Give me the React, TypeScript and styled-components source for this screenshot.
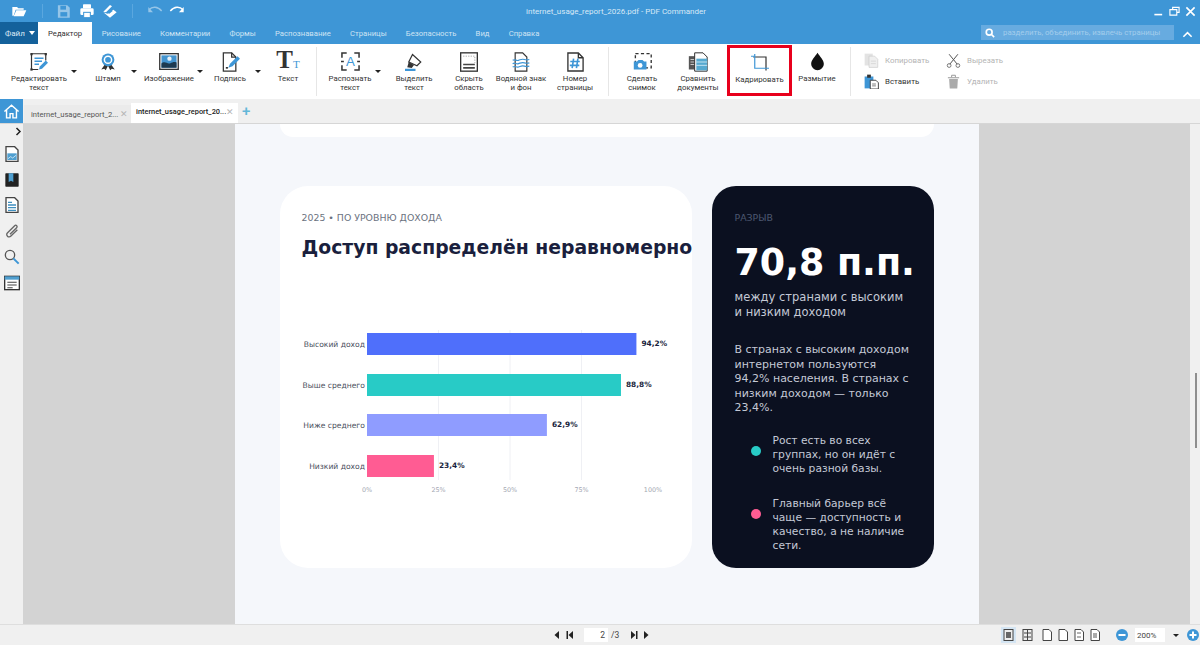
import React from 'react';
import styled, { createGlobalStyle } from 'styled-components';

const BLUE = '#3e96d6';
const DARK = '#333';

const GlobalStyle = createGlobalStyle`
  html, body { margin: 0; padding: 0; background: #f0f0f0; }
  * { box-sizing: border-box; }
`;

const Window = styled.div`
  width: 1200px;
  height: 645px;
  overflow: hidden;
  display: flex;
  flex-direction: column;
  font-family: Roboto, "Liberation Sans", sans-serif;
`;

/* title bar */
const TitleBar = styled.div`
  height: 22px;
  background: ${BLUE};
  display: grid;
  grid-template-columns: 1fr auto 1fr;
  align-items: center;
`;
const QuickBar = styled.div`
  display: flex;
  align-items: center;
  padding-left: 11px;
`;
const QuickButton = styled.div<{ $ml: number; $dim?: boolean }>`
  margin-left: ${(p) => p.$ml}px;
  display: flex;
  opacity: ${(p) => (p.$dim ? 0.45 : 1)};
`;
const QuickSep = styled.div<{ $ml: number }>`
  margin-left: ${(p) => p.$ml}px;
  width: 1px;
  height: 14px;
  background: #5aa7df;
`;
const DocTitle = styled.div`
  margin-left: 32px;
  color: #d7e9f6;
  font-size: 8px;
`;
const WinControls = styled.div`
  display: flex;
  justify-content: flex-end;
  align-items: center;
  gap: 5px;
  padding-right: 4px;
`;

/* ribbon tabs */
const RibbonRow = styled.div`
  height: 22px;
  background: ${BLUE};
  display: flex;
  align-items: stretch;
`;
const FileTab = styled.div`
  width: 38px;
  background: #14619b;
  color: #dcebf6;
  font-size: 8px;
  display: flex;
  align-items: center;
  gap: 4px;
  padding-left: 5px;
`;
const FileCaret = styled.span`
  border-left: 3.5px solid transparent;
  border-right: 3.5px solid transparent;
  border-top: 4px solid #fff;
`;
const RibbonTab = styled.div<{ $active?: boolean }>`
  padding: 0 ${(p) => (p.$active ? '10px' : '9.6px')};
  display: flex;
  align-items: center;
  font-size: 7.7px;
  white-space: nowrap;
  background: ${(p) => (p.$active ? '#fff' : 'transparent')};
  color: ${(p) => (p.$active ? '#333' : '#cfe4f4')};
`;
const RibbonSpacer = styled.div`
  flex: 1;
`;
const SearchBox = styled.div`
  width: 193px;
  height: 15px;
  margin-top: 3px;
  background: #67abe0;
  display: flex;
  align-items: center;
  gap: 8px;
  padding-left: 4px;
  color: #a3cdec;
  font-size: 7.8px;
  white-space: nowrap;
`;
const Collapse = styled.div`
  width: 26px;
  display: flex;
  align-items: center;
  justify-content: center;
  padding-top: 2px;
`;

/* toolbar */
const Toolbar = styled.div`
  height: 55px;
  background: #fff;
  display: flex;
  align-items: flex-start;
  padding-left: 8px;
`;
const Tool = styled.div<{ $w: number; $ml?: number; $highlight?: boolean }>`
  width: ${(p) => p.$w}px;
  margin-left: ${(p) => p.$ml ?? 0}px;
  margin-top: ${(p) => (p.$highlight ? 1 : 0)}px;
  height: ${(p) => (p.$highlight ? '51px' : '55px')};
  border: ${(p) => (p.$highlight ? '3px solid #e8001c' : 'none')};
  padding-top: ${(p) => (p.$highlight ? 4 : 7)}px;
  display: flex;
  flex-direction: column;
  align-items: center;
  flex-shrink: 0;
`;
const ToolIcon = styled.div`
  height: 21px;
  display: flex;
  align-items: center;
  justify-content: center;
`;
const ToolLabel = styled.div`
  margin-top: 1.5px;
  font-size: 7.8px;
  line-height: 9px;
  color: #333;
  text-align: center;
  white-space: pre;
`;
const Caret = styled.div`
  width: 8px;
  height: 55px;
  flex-shrink: 0;
  display: flex;
  justify-content: center;
  padding-top: 26px;
  &::after {
    content: '';
    height: 0;
    border-left: 3px solid transparent;
    border-right: 3px solid transparent;
    border-top: 3px solid #222;
  }
`;
const ToolSep = styled.div<{ $ml: number }>`
  width: 1px;
  height: 49px;
  margin: 3px 0 0 ${(p) => p.$ml}px;
  flex-shrink: 0;
  background: #e6e6e6;
`;
const TextGlyph = styled.div`
  display: flex;
  align-items: baseline;
  font-family: "Liberation Serif", serif;
  font-size: 25px;
  line-height: 21px;
  font-weight: 700;
  color: ${DARK};
`;
const TextGlyphSmall = styled.span`
  font-size: 11px;
  font-weight: 400;
  color: ${BLUE};
`;
const SmallGrid = styled.div`
  margin: 6px 0 0 13px;
  display: grid;
  grid-template-columns: 82px 70px;
  grid-auto-rows: 21px;
`;
const SmallTool = styled.div<{ $disabled?: boolean }>`
  display: flex;
  align-items: center;
  gap: 6px;
  font-size: 7.9px;
  color: ${(p) => (p.$disabled ? '#b4b4b4' : '#333')};
`;

/* document tabs */
const TabBar = styled.div`
  height: 25px;
  background: #f0f0f0;
  border-bottom: 1px solid #d6d6d6;
  display: flex;
  align-items: flex-end;
`;
const HomeButton = styled.div`
  width: 23px;
  height: 24px;
  background: ${BLUE};
  display: flex;
  align-items: center;
  justify-content: center;
`;
const DocTab = styled.div<{ $active?: boolean }>`
  width: 107px;
  margin-left: ${(p) => (p.$active ? 0 : 1)}px;
  height: ${(p) => (p.$active ? 20 : 18)}px;
  background: ${(p) => (p.$active ? '#fff' : '#ebebeb')};
  color: ${(p) => (p.$active ? '#222' : '#555')};
  font-weight: ${(p) => (p.$active ? 500 : 400)};
  font-size: ${(p) => (p.$active ? 7.4 : 7.6)}px;
  display: flex;
  align-items: center;
  justify-content: space-between;
  padding: ${(p) => (p.$active ? '0 4px 3px 5px' : '0 3px 0 7px')};
  white-space: nowrap;
`;
const TabClose = styled.span`
  color: #b5b5b5;
  font-size: 9px;
`;
const AddTab = styled.span`
  color: #62b7d8;
  font-size: 15px;
  font-weight: 500;
  line-height: 20px;
  margin: 0 0 2px 4px;
`;

/* body */
const Body = styled.div`
  flex: 1;
  min-height: 0;
  display: flex;
`;
const Sidebar = styled.div`
  width: 23px;
  background: #f0f0f0;
  display: flex;
  flex-direction: column;
  align-items: center;
  padding-top: 3px;
`;
const SideChevron = styled.div`
  align-self: flex-end;
  height: 12px;
  margin: 0 1px 2px 0;
  display: flex;
`;
const SideIcon = styled.div`
  height: 25.8px;
  display: flex;
  align-items: center;
`;
const Viewer = styled.div`
  flex: 1;
  min-width: 0;
  background: #d3d3d3;
  display: flex;
  justify-content: center;
`;
const Scrollbar = styled.div`
  width: 10px;
  background: #f0f0f0;
  padding: 249px 0 0 5px;
`;
const ScrollThumb = styled.div`
  width: 2px;
  height: 75px;
  background: #8e8e8e;
`;
const Page = styled.div`
  width: 744px;
  background: #f5f7fb;
  padding: 0 45px;
  font-family: "DejaVu Sans", sans-serif;
`;
const PrevCard = styled.div`
  width: 654px;
  height: 13px;
  background: #fff;
  border-radius: 0 0 22px 22px;
`;
const Cards = styled.div`
  margin-top: 49px;
  display: grid;
  grid-template-columns: 412px 222px;
  gap: 20px;
  height: 382px;
`;
const ChartCard = styled.div`
  background: #fff;
  border-radius: 28px;
  padding: 25px 0 0 22px;
  display: flex;
  flex-direction: column;
`;
const Eyebrow = styled.div<{ $dark?: boolean }>`
  font-size: 9.4px;
  line-height: 13px;
  color: ${(p) => (p.$dark ? '#4d5870' : '#6b7280')};
`;
const Heading = styled.div`
  margin-top: 11px;
  font-size: 18.8px;
  line-height: 26px;
  font-weight: 700;
  color: #1a1f3d;
  white-space: nowrap;
`;
const Chart = styled.svg`
  margin: 69px 0 0 -2px;
  display: block;
`;
const GapCard = styled.div`
  background: #0b1020;
  border-radius: 24px;
  padding: 25px 20px 0 23px;
  color: #c4c9d6;
`;
const BigNumber = styled.div`
  margin-top: 15px;
  font-size: 36.4px;
  line-height: 47px;
  font-weight: 700;
  color: #fff;
  white-space: nowrap;
`;
const GapLead = styled.div`
  margin-top: 4px;
  font-size: 11.5px;
  line-height: 15px;
  white-space: nowrap;
`;
const GapText = styled.div`
  margin-top: 23px;
  font-size: 11px;
  line-height: 14.6px;
  white-space: nowrap;
`;
const Points = styled.div`
  margin-top: 18px;
  padding-left: 16px;
  display: flex;
  flex-direction: column;
  gap: 21px;
`;
const Point = styled.div`
  display: flex;
  align-items: flex-start;
  gap: 12px;
  font-size: 10.7px;
  line-height: 14px;
  white-space: nowrap;
`;
const Dot = styled.span<{ $color: string }>`
  width: 10px;
  height: 10px;
  margin-top: 12px;
  border-radius: 50%;
  background: ${(p) => p.$color};
  flex-shrink: 0;
`;

/* status bar */
const StatusBar = styled.div`
  height: 21px;
  background: #f0f0f0;
  border-top: 1px solid #dedede;
  display: flex;
  align-items: center;
`;
const NavGroup = styled.div`
  margin-left: 552px;
  display: flex;
  align-items: center;
  font-size: 8.5px;
  color: #444;
`;
const NavIcon = styled.div<{ $ml?: number }>`
  margin-left: ${(p) => p.$ml ?? 0}px;
  display: flex;
`;
const PageInput = styled.div`
  width: 24px;
  height: 14px;
  margin-left: 8px;
  padding-right: 3px;
  background: #fff;
  display: flex;
  align-items: center;
  justify-content: flex-end;
`;
const PageTotal = styled.span`
  margin-left: 3px;
`;
const ViewGroup = styled.div`
  margin-left: auto;
  display: flex;
  align-items: center;
`;
const ViewIcon = styled.div<{ $ml: number; $active?: boolean }>`
  margin-left: ${(p) => p.$ml}px;
  padding: 2px;
  display: flex;
  background: ${(p) => (p.$active ? '#d4e5f3' : 'transparent')};
`;
const ZoomInput = styled.div`
  width: 30px;
  height: 14px;
  margin-left: 7px;
  padding-left: 2px;
  background: #fff;
  color: #444;
  font-size: 8px;
  display: flex;
  align-items: center;
`;
const ZoomCaret = styled.div`
  width: 12px;
  margin-left: 5px;
  display: flex;
  justify-content: center;
  &::after {
    content: '';
    border-left: 3px solid transparent;
    border-right: 3px solid transparent;
    border-top: 3px solid #222;
  }
`;
const CircleBtn = styled.div<{ $ml: number }>`
  margin-left: ${(p) => p.$ml}px;
  display: flex;
`;

/* icons */
const Ico: React.FC<React.PropsWithChildren<{ s: number; vb?: number }>> = ({ s, vb = 24, children }) => (
  <svg width={s} height={s} viewBox={`0 0 ${vb} ${vb}`} fill="none">
    {children}
  </svg>
);

const FolderIcon = () => (
  <Ico s={16}>
    <path d="M2 6h7l2 2h8v2H7l-3 9H2z" fill="#fff" />
    <path d="M8 11h15l-4 9H4z" fill="#fff" />
  </Ico>
);
const SaveIcon = () => (
  <Ico s={15}>
    <path d="M3 2h15l4 4v16H3z" fill="#fff" />
    <rect x="7" y="3" width="9" height="6" fill={BLUE} />
    <rect x="7" y="13" width="11" height="7" fill={BLUE} />
  </Ico>
);
const PrintIcon = () => (
  <Ico s={16}>
    <rect x="6" y="2" width="12" height="6" rx="1" fill="#fff" />
    <rect x="2" y="8" width="20" height="10" rx="2" fill="#fff" />
    <rect x="7" y="14" width="10" height="8" fill="#fff" stroke={BLUE} strokeWidth="1.5" />
  </Ico>
);
const ScanIcon = () => (
  <Ico s={16}>
    <path d="M2 13 12 3l3 2-9 9z" fill="#fff" />
    <path d="M2 14l10 8 10-8-5-4-9 6z" fill="#fff" />
    <path d="M8 15l6-5 2 2-5 4z" fill={BLUE} />
  </Ico>
);
const UndoIcon = ({ flip }: { flip?: boolean }) => (
  <Ico s={16}>
    <g transform={flip ? 'matrix(-1 0 0 1 24 0)' : undefined}>
      <path d="M3 10c5-5 13-5 19 2" stroke="#fff" strokeWidth="2.2" />
      <path d="M2 6v8h7z" fill="#fff" />
    </g>
  </Ico>
);
const MinIcon = () => (
  <Ico s={11}>
    <rect x="3" y="17" width="17" height="3.5" fill="#fff" />
  </Ico>
);
const RestoreIcon = () => (
  <Ico s={11}>
    <path d="M8 7V3h14v11h-5M2 8h15v12H2z" stroke="#fff" strokeWidth="2.5" />
  </Ico>
);
const CloseIcon = () => (
  <Ico s={11}>
    <path d="M3 3l18 18M21 3 3 21" stroke="#fff" strokeWidth="3.5" />
  </Ico>
);
const SearchIcon = () => (
  <Ico s={10}>
    <circle cx="10" cy="10" r="7" stroke="#fff" strokeWidth="4" />
    <path d="M15 15l7 7" stroke="#fff" strokeWidth="4" />
  </Ico>
);
const ChevronUp = () => (
  <Ico s={11}>
    <path d="M3 17l9-9 9 9" stroke="#fff" strokeWidth="3.5" />
  </Ico>
);
const HomeIcon = () => (
  <Ico s={17}>
    <path d="M2 12 12 3l10 9M5 10v11h5v-6h4v6h5V10" stroke="#fff" strokeWidth="2" />
  </Ico>
);

const EditTextIcon = () => (
  <Ico s={18}>
    <path d="M2 1h19M2 1v21M21 1v9M2 22h9" stroke={DARK} strokeWidth="1.6" />
    <rect x="0.5" y="0" width="3" height="3" fill={DARK} />
    <rect x="19.5" y="0" width="3" height="3" fill={DARK} />
    <rect x="0.5" y="20.5" width="3" height="3" fill={DARK} />
    <path d="M6 7h12M6 11h10M6 15h6" stroke={BLUE} strokeWidth="1.7" />
    <path d="M12 22l1-4 8-8 3 3-8 8z" fill={BLUE} />
  </Ico>
);
const StampIcon = () => (
  <Ico s={18}>
    <path d="M8 15 3 22l4-1 2 2 3-6M16 15l5 7-4-1-2 2-3-6" fill={DARK} />
    <circle cx="12" cy="9" r="8.5" fill={BLUE} />
    <circle cx="12" cy="9" r="5.8" fill="#fff" />
    <circle cx="12" cy="9" r="3.8" fill={BLUE} />
  </Ico>
);
const ImageIcon = () => (
  <svg width="20" height="17" viewBox="0 0 21 18" fill="none">
    <rect x="0.7" y="0.7" width="19.6" height="16.6" stroke={DARK} strokeWidth="1.4" fill="#fff" />
    <rect x="2.5" y="2.5" width="16" height="13" fill="#4394cf" />
    <circle cx="11" cy="6" r="2.3" fill="#e8f2fa" />
    <path d="M2.5 11c4-3 6 1 9 0s4-2 7-1v5.5h-16z" fill="#1d3a50" />
  </svg>
);
const SignIcon = () => (
  <Ico s={20}>
    <path d="M4 1h10l5 5v17H4z" stroke={DARK} strokeWidth="1.5" fill="#fff" />
    <path d="M14 1v5h5" stroke={DARK} strokeWidth="1.5" />
    <path d="M10 19l2-5 9-9 3 3-9 9z" fill={BLUE} />
    <rect x="7" y="18" width="2.5" height="2" fill={DARK} />
  </Ico>
);
const TextIcon = () => (
  <TextGlyph>T<TextGlyphSmall>T</TextGlyphSmall></TextGlyph>
);
const RecognizeIcon = () => (
  <svg width="19" height="19" viewBox="0 0 20 20" fill="none">
    <path d="M1 6V1h5M14 1h5v5M1 14v5h5M14 19h5v-5" stroke={DARK} strokeWidth="1.6" />
    <path d="M0 10h3M17 10h3" stroke={DARK} strokeWidth="1.4" />
    <text x="10" y="15" textAnchor="middle" fontFamily="Liberation Sans" fontSize="14" fill={BLUE}>A</text>
  </svg>
);
const HighlightIcon = () => (
  <Ico s={18}>
    <path d="M10 2 21 12l-5 5-11-5z" stroke={DARK} strokeWidth="1.6" fill="#fff" />
    <path d="M5 12l-2 7 6 1 3-4" fill={DARK} />
    <path d="M0 21h14v3H0z" fill={BLUE} />
  </Ico>
);
const HideIcon = () => (
  <Ico s={20}>
    <rect x="2" y="1" width="20" height="22" stroke={DARK} strokeWidth="1.6" fill="#fff" />
    <path d="M5 5h14v8" stroke="#999" strokeDasharray="1.5 1.5" />
    <path d="M5 15h14M5 19h14" stroke="#444" strokeWidth="2" />
  </Ico>
);
const WatermarkIcon = () => (
  <Ico s={20}>
    <path d="M5 1h9l5 5v17H5z" stroke={DARK} strokeWidth="1.4" fill="#fff" />
    <path d="M2 10c3-2 4 1 7 0s4-2 7-1 3 1 6 0M2 14c3-2 4 1 7 0s4-2 7-1 3 1 6 0M2 18c3-2 4 1 7 0s4-2 7-1 3 1 6 0" stroke={BLUE} strokeWidth="1.4" />
  </Ico>
);
const NumberIcon = () => (
  <svg width="19" height="20" viewBox="0 0 20 21" fill="none">
    <path d="M2 1h11l5 5v14H2z" stroke={DARK} strokeWidth="1.4" fill="#fff" />
    <path d="M13 1v5h5" stroke={DARK} strokeWidth="1.4" />
    <path d="M8 7 6.5 17M12.5 7 11 17M4.5 10h10M4 14h10" stroke={BLUE} strokeWidth="1.7" />
  </svg>
);
const SnapshotIcon = () => (
  <Ico s={19}>
    <rect x="3" y="2" width="20" height="18" stroke={DARK} strokeWidth="1.7" strokeDasharray="4 3" />
    <path d="M1 12h4l2-2h5l2 2h3v10H1z" fill={BLUE} />
    <circle cx="9" cy="17" r="3" fill="#fff" />
  </Ico>
);
const CompareIcon = () => (
  <Ico s={20}>
    <path d="M1 5h11v16H1z" fill="#555" />
    <path d="M3 9h7M3 12h7M3 15h7" stroke="#ddd" />
    <path d="M8 1h10l5 5v17H8z" stroke={DARK} strokeWidth="1.2" fill="#fff" />
    <rect x="10" y="8" width="13" height="14" fill="#56a9d0" />
    <path d="M10 12h13M10 16h13" stroke="#d9eef8" />
  </Ico>
);
const CropIcon = () => (
  <Ico s={18}>
    <path d="M3 4h17v18" stroke={DARK} strokeWidth="1.6" />
    <path d="M5 0v19h19M0 3h5" stroke={BLUE} strokeWidth="1.6" />
  </Ico>
);
const DropIcon = () => (
  <Ico s={19}>
    <path d="M12 1c3 5 8 9 8 14a8 8 0 0 1-16 0c0-5 5-9 8-14z" fill="#111" />
  </Ico>
);
const CopyIcon = () => (
  <Ico s={15}>
    <rect x="1" y="1" width="13" height="19" fill="#e3e3e3" />
    <path d="M8 5h9l5 5v13H8z" fill="#efefef" stroke="#c9c9c9" />
    <path d="M11 13h8M11 17h8" stroke="#ccc" />
  </Ico>
);
const CutIcon = () => (
  <Ico s={15}>
    <path d="M5 2l13 16M19 2 6 18" stroke="#555" strokeWidth="1.6" />
    <circle cx="5" cy="20" r="3" stroke="#777" strokeWidth="1.6" />
    <circle cx="19" cy="20" r="3" stroke="#777" strokeWidth="1.6" />
  </Ico>
);
const PasteIcon = () => (
  <Ico s={15}>
    <rect x="1" y="4" width="14" height="19" fill={BLUE} />
    <rect x="5" y="1" width="6" height="5" fill={DARK} />
    <path d="M10 10h9l4 4v10H10z" fill="#fff" stroke={DARK} strokeWidth="1.4" />
    <path d="M13 16h6M13 19h6" stroke={DARK} />
  </Ico>
);
const TrashIcon = () => (
  <Ico s={15}>
    <path d="M3 6h18M9 5V2h6v3" stroke="#999" strokeWidth="1.6" />
    <path d="M5 8h14l-1 15H6z" fill="#aaa" />
  </Ico>
);

const SideChevronIcon = () => (
  <svg width="7" height="9" viewBox="0 0 7 9" fill="none">
    <path d="M1.5 1l3.5 3.5L1.5 8" stroke="#222" strokeWidth="1.5" />
  </svg>
);
const SideDocIcon = () => (
  <Ico s={16}>
    <path d="M3 1h13l5 5v17H3z" fill="#fff" stroke="#444" strokeWidth="2" />
    <rect x="5" y="11" width="14" height="10" fill="#4f9fd0" />
    <path d="M6 19l4-3 3 2 5-4" stroke="#fff" />
  </Ico>
);
const SideBookIcon = () => (
  <Ico s={16}>
    <rect x="2" y="2" width="20" height="20" rx="1" fill="#222" />
    <path d="M7 2h7v13l-3.5-2L7 15z" fill="#4f9fd0" />
  </Ico>
);
const SideListIcon = () => (
  <Ico s={16}>
    <path d="M3 1h13l5 5v17H3z" fill="#fff" stroke="#444" strokeWidth="2" />
    <path d="M6 8h6M6 12h12M6 16h12M6 20h12" stroke="#3f8fc0" strokeWidth="2" />
  </Ico>
);
const SideClipIcon = () => (
  <Ico s={16}>
    <path d="M20 10 10 20c-3 3-8-2-5-5L16 4c2-2 5 1 3 3L9 17" stroke="#666" strokeWidth="2" />
  </Ico>
);
const SideSearchIcon = () => (
  <Ico s={16}>
    <circle cx="9" cy="9" r="7" stroke="#555" strokeWidth="2" />
    <path d="M14 14l8 8" stroke={BLUE} strokeWidth="3" />
  </Ico>
);
const SideFormIcon = () => (
  <Ico s={16}>
    <rect x="1" y="2" width="22" height="20" fill="#fff" stroke="#333" strokeWidth="2" />
    <rect x="1" y="2" width="22" height="5" fill="#4f9fd0" />
    <path d="M5 11h14M5 15h14M5 19h8" stroke="#444" strokeWidth="1.6" />
  </Ico>
);

const NavArrow = ({ dir, bar }: { dir: 'l' | 'r'; bar?: boolean }) => (
  <svg width="10" height="10" viewBox="0 0 10 10">
    <g transform={dir === 'l' ? undefined : 'matrix(-1 0 0 1 10 0)'}>
      <path d="M7 1v8L2.5 5z" fill="#222" />
      {bar && <rect x="0.5" y="1" width="1.5" height="8" fill="#222" />}
    </g>
  </svg>
);
const PageMini = ({ variant }: { variant: number }) => (
  <svg width="10" height="12" viewBox="0 0 10 12" fill="none">
    <path d="M1 .5h6l2.5 2.5v8.5H1z" stroke="#444" fill="#fff" />
    {variant === 1 && <path d="M3 4h4M3 8h4" stroke="#666" />}
    {variant === 2 && <rect x="3" y="4" width="4" height="5" fill="#aaa" />}
  </svg>
);
const LayoutMini = ({ two }: { two?: boolean }) => (
  <svg width="11" height="12" viewBox="0 0 11 12" fill="none">
    <rect x="1" y=".5" width="9" height="11" stroke="#444" fill="#eee" />
    {two ? <path d="M5.5 1v10M2 4h7M2 8h7" stroke="#444" /> : <path d="M3 3h5v6H3z" fill="#666" />}
  </svg>
);
const Circle = ({ plus }: { plus?: boolean }) => (
  <svg width="12" height="12" viewBox="0 0 12 12">
    <circle cx="6" cy="6" r="6" fill={BLUE} />
    <rect x="2.5" y="5" width="7" height="2" fill="#fff" />
    {plus && <rect x="5" y="2.5" width="2" height="7" fill="#fff" />}
  </svg>
);

/* data */
const ribbonTabs = ['Рисование', 'Комментарии', 'Формы', 'Распознавание', 'Страницы', 'Безопасность', 'Вид', 'Справка'];

type ToolDef = { label: string; icon: React.ReactNode; w: number; ml?: number; caret?: boolean; sep?: number; hl?: boolean };
const tools: ToolDef[] = [
  { label: 'Редактировать\nтекст', icon: <EditTextIcon />, w: 62, caret: true },
  { label: 'Штамп', icon: <StampIcon />, w: 44, ml: 8, caret: true },
  { label: 'Изображение', icon: <ImageIcon />, w: 54, ml: 4, caret: true },
  { label: 'Подпись', icon: <SignIcon />, w: 48, ml: 2, caret: true },
  { label: 'Текст', icon: <TextIcon />, w: 40, ml: 6, sep: 8 },
  { label: 'Распознать\nтекст', icon: <RecognizeIcon />, w: 48, ml: 9, caret: true },
  { label: 'Выделить\nтекст', icon: <HighlightIcon />, w: 50, ml: 7 },
  { label: 'Скрыть\nобласть', icon: <HideIcon />, w: 50, ml: 5 },
  { label: 'Водяной знак\nи фон', icon: <WatermarkIcon />, w: 54 },
  { label: 'Номер\nстраницы', icon: <NumberIcon />, w: 50, ml: 2, sep: 8 },
  { label: 'Сделать\nснимок', icon: <SnapshotIcon />, w: 50, ml: 8 },
  { label: 'Сравнить\nдокументы', icon: <CompareIcon />, w: 56, ml: 3 },
  { label: 'Кадрировать', icon: <CropIcon />, w: 65, ml: 1, hl: true },
  { label: 'Размытие', icon: <DropIcon />, w: 50, sep: 8 },
];

const smallTools = [
  { label: 'Копировать', icon: <CopyIcon />, disabled: true },
  { label: 'Вырезать', icon: <CutIcon />, disabled: true },
  { label: 'Вставить', icon: <PasteIcon /> },
  { label: 'Удалить', icon: <TrashIcon />, disabled: true },
];

const sideIcons = [<SideDocIcon />, <SideBookIcon />, <SideListIcon />, <SideClipIcon />, <SideSearchIcon />, <SideFormIcon />];

const bars = [
  { name: 'Высокий доход', value: 94.2, text: '94,2%', color: '#4f6ffb', y: 3 },
  { name: 'Выше среднего', value: 88.8, text: '88,8%', color: '#28cbc6', y: 44 },
  { name: 'Ниже среднего', value: 62.9, text: '62,9%', color: '#8f9cff', y: 84 },
  { name: 'Низкий доход', value: 23.4, text: '23,4%', color: '#ff5c93', y: 125 },
];
const ticks = [0, 25, 50, 75, 100];
const PLOT_X = 67;
const PER_CENT = 2.86;

const IncomeChart = () => (
  <Chart width="390" height="170" viewBox="0 0 390 170" fontFamily="DejaVu Sans">
    {ticks.slice(1, 4).map((t) => (
      <line key={t} x1={PLOT_X + t * PER_CENT} x2={PLOT_X + t * PER_CENT} y1="0" y2="150" stroke="#eff0f4" />
    ))}
    {bars.map((b) => (
      <g key={b.name}>
        <rect x={PLOT_X} y={b.y} width={b.value * PER_CENT} height="22" fill={b.color} />
        <text x={PLOT_X - 2} y={b.y + 14} textAnchor="end" fontSize="7.6" fill="#4b5060">{b.name}</text>
        <text x={PLOT_X + b.value * PER_CENT + 5} y={b.y + 13} fontSize="7.4" fontWeight="700" fill="#1a1f3d">{b.text}</text>
      </g>
    ))}
    {ticks.map((t) => (
      <text key={t} x={PLOT_X + t * PER_CENT} y="162" textAnchor="middle" fontSize="6.4" fill="#a3a7b2">{t}%</text>
    ))}
  </Chart>
);

const App: React.FC = () => (
  <Window>
    <GlobalStyle />
    <TitleBar>
      <QuickBar>
        <QuickButton $ml={0}><FolderIcon /></QuickButton>
        <QuickSep $ml={15} />
        <QuickButton $ml={13} $dim><SaveIcon /></QuickButton>
        <QuickButton $ml={8}><PrintIcon /></QuickButton>
        <QuickButton $ml={7}><ScanIcon /></QuickButton>
        <QuickSep $ml={14} />
        <QuickButton $ml={14} $dim><UndoIcon /></QuickButton>
        <QuickButton $ml={6}><UndoIcon flip /></QuickButton>
      </QuickBar>
      <DocTitle>internet_usage_report_2026.pdf - PDF Commander</DocTitle>
      <WinControls>
        <MinIcon />
        <RestoreIcon />
        <CloseIcon />
      </WinControls>
    </TitleBar>

    <RibbonRow>
      <FileTab>Файл<FileCaret /></FileTab>
      <RibbonTab $active>Редактор</RibbonTab>
      {ribbonTabs.map((t) => <RibbonTab key={t}>{t}</RibbonTab>)}
      <RibbonSpacer />
      <SearchBox>
        <SearchIcon />
        разделить, объединить, извлечь страницы
      </SearchBox>
      <Collapse><ChevronUp /></Collapse>
    </RibbonRow>

    <Toolbar>
      {tools.map((t) => (
        <React.Fragment key={t.label}>
          <Tool $w={t.w} $ml={t.ml} $highlight={t.hl}>
            <ToolIcon>{t.icon}</ToolIcon>
            <ToolLabel>{t.label}</ToolLabel>
          </Tool>
          {t.caret && <Caret />}
          {t.sep && <ToolSep $ml={t.sep} />}
        </React.Fragment>
      ))}
      <SmallGrid>
        {smallTools.map((t) => (
          <SmallTool key={t.label} $disabled={t.disabled}>{t.icon}{t.label}</SmallTool>
        ))}
      </SmallGrid>
    </Toolbar>

    <TabBar>
      <HomeButton><HomeIcon /></HomeButton>
      <DocTab>internet_usage_report_2...<TabClose>✕</TabClose></DocTab>
      <DocTab $active>internet_usage_report_20...<TabClose>✕</TabClose></DocTab>
      <AddTab>+</AddTab>
    </TabBar>

    <Body>
      <Sidebar>
        <SideChevron><SideChevronIcon /></SideChevron>
        {sideIcons.map((icon, i) => <SideIcon key={i}>{icon}</SideIcon>)}
      </Sidebar>
      <Viewer>
        <Page>
          <PrevCard />
          <Cards>
            <ChartCard>
              <Eyebrow>2025 • ПО УРОВНЮ ДОХОДА</Eyebrow>
              <Heading>Доступ распределён неравномерно</Heading>
              <IncomeChart />
            </ChartCard>
            <GapCard>
              <Eyebrow $dark>РАЗРЫВ</Eyebrow>
              <BigNumber>70,8 п.п.</BigNumber>
              <GapLead>между странами с высоким<br />и низким доходом</GapLead>
              <GapText>
                В странах с высоким доходом<br />
                интернетом пользуются<br />
                94,2% населения. В странах с<br />
                низким доходом — только<br />
                23,4%.
              </GapText>
              <Points>
                <Point>
                  <Dot $color="#28cbc6" />
                  <span>Рост есть во всех<br />группах, но он идёт с<br />очень разной базы.</span>
                </Point>
                <Point>
                  <Dot $color="#ff5c93" />
                  <span>Главный барьер всё<br />чаще — доступность и<br />качество, а не наличие<br />сети.</span>
                </Point>
              </Points>
            </GapCard>
          </Cards>
        </Page>
      </Viewer>
      <Scrollbar><ScrollThumb /></Scrollbar>
    </Body>

    <StatusBar>
      <NavGroup>
        <NavIcon><NavArrow dir="l" /></NavIcon>
        <NavIcon $ml={4}><NavArrow dir="l" bar /></NavIcon>
        <PageInput>2</PageInput>
        <PageTotal>/3</PageTotal>
        <NavIcon $ml={9}><NavArrow dir="r" bar /></NavIcon>
        <NavIcon $ml={3}><NavArrow dir="r" /></NavIcon>
      </NavGroup>
      <ViewGroup>
        <ViewIcon $ml={0} $active><LayoutMini /></ViewIcon>
        <ViewIcon $ml={4}><LayoutMini two /></ViewIcon>
        <ViewIcon $ml={5}><PageMini variant={0} /></ViewIcon>
        <ViewIcon $ml={2}><PageMini variant={0} /></ViewIcon>
        <ViewIcon $ml={2}><PageMini variant={1} /></ViewIcon>
        <ViewIcon $ml={2}><PageMini variant={2} /></ViewIcon>
        <CircleBtn $ml={14}><Circle /></CircleBtn>
        <ZoomInput>200%</ZoomInput>
        <ZoomCaret />
        <CircleBtn $ml={5}><Circle plus /></CircleBtn>
        <CircleBtn $ml={1} />
      </ViewGroup>
    </StatusBar>
  </Window>
);

export default App;
